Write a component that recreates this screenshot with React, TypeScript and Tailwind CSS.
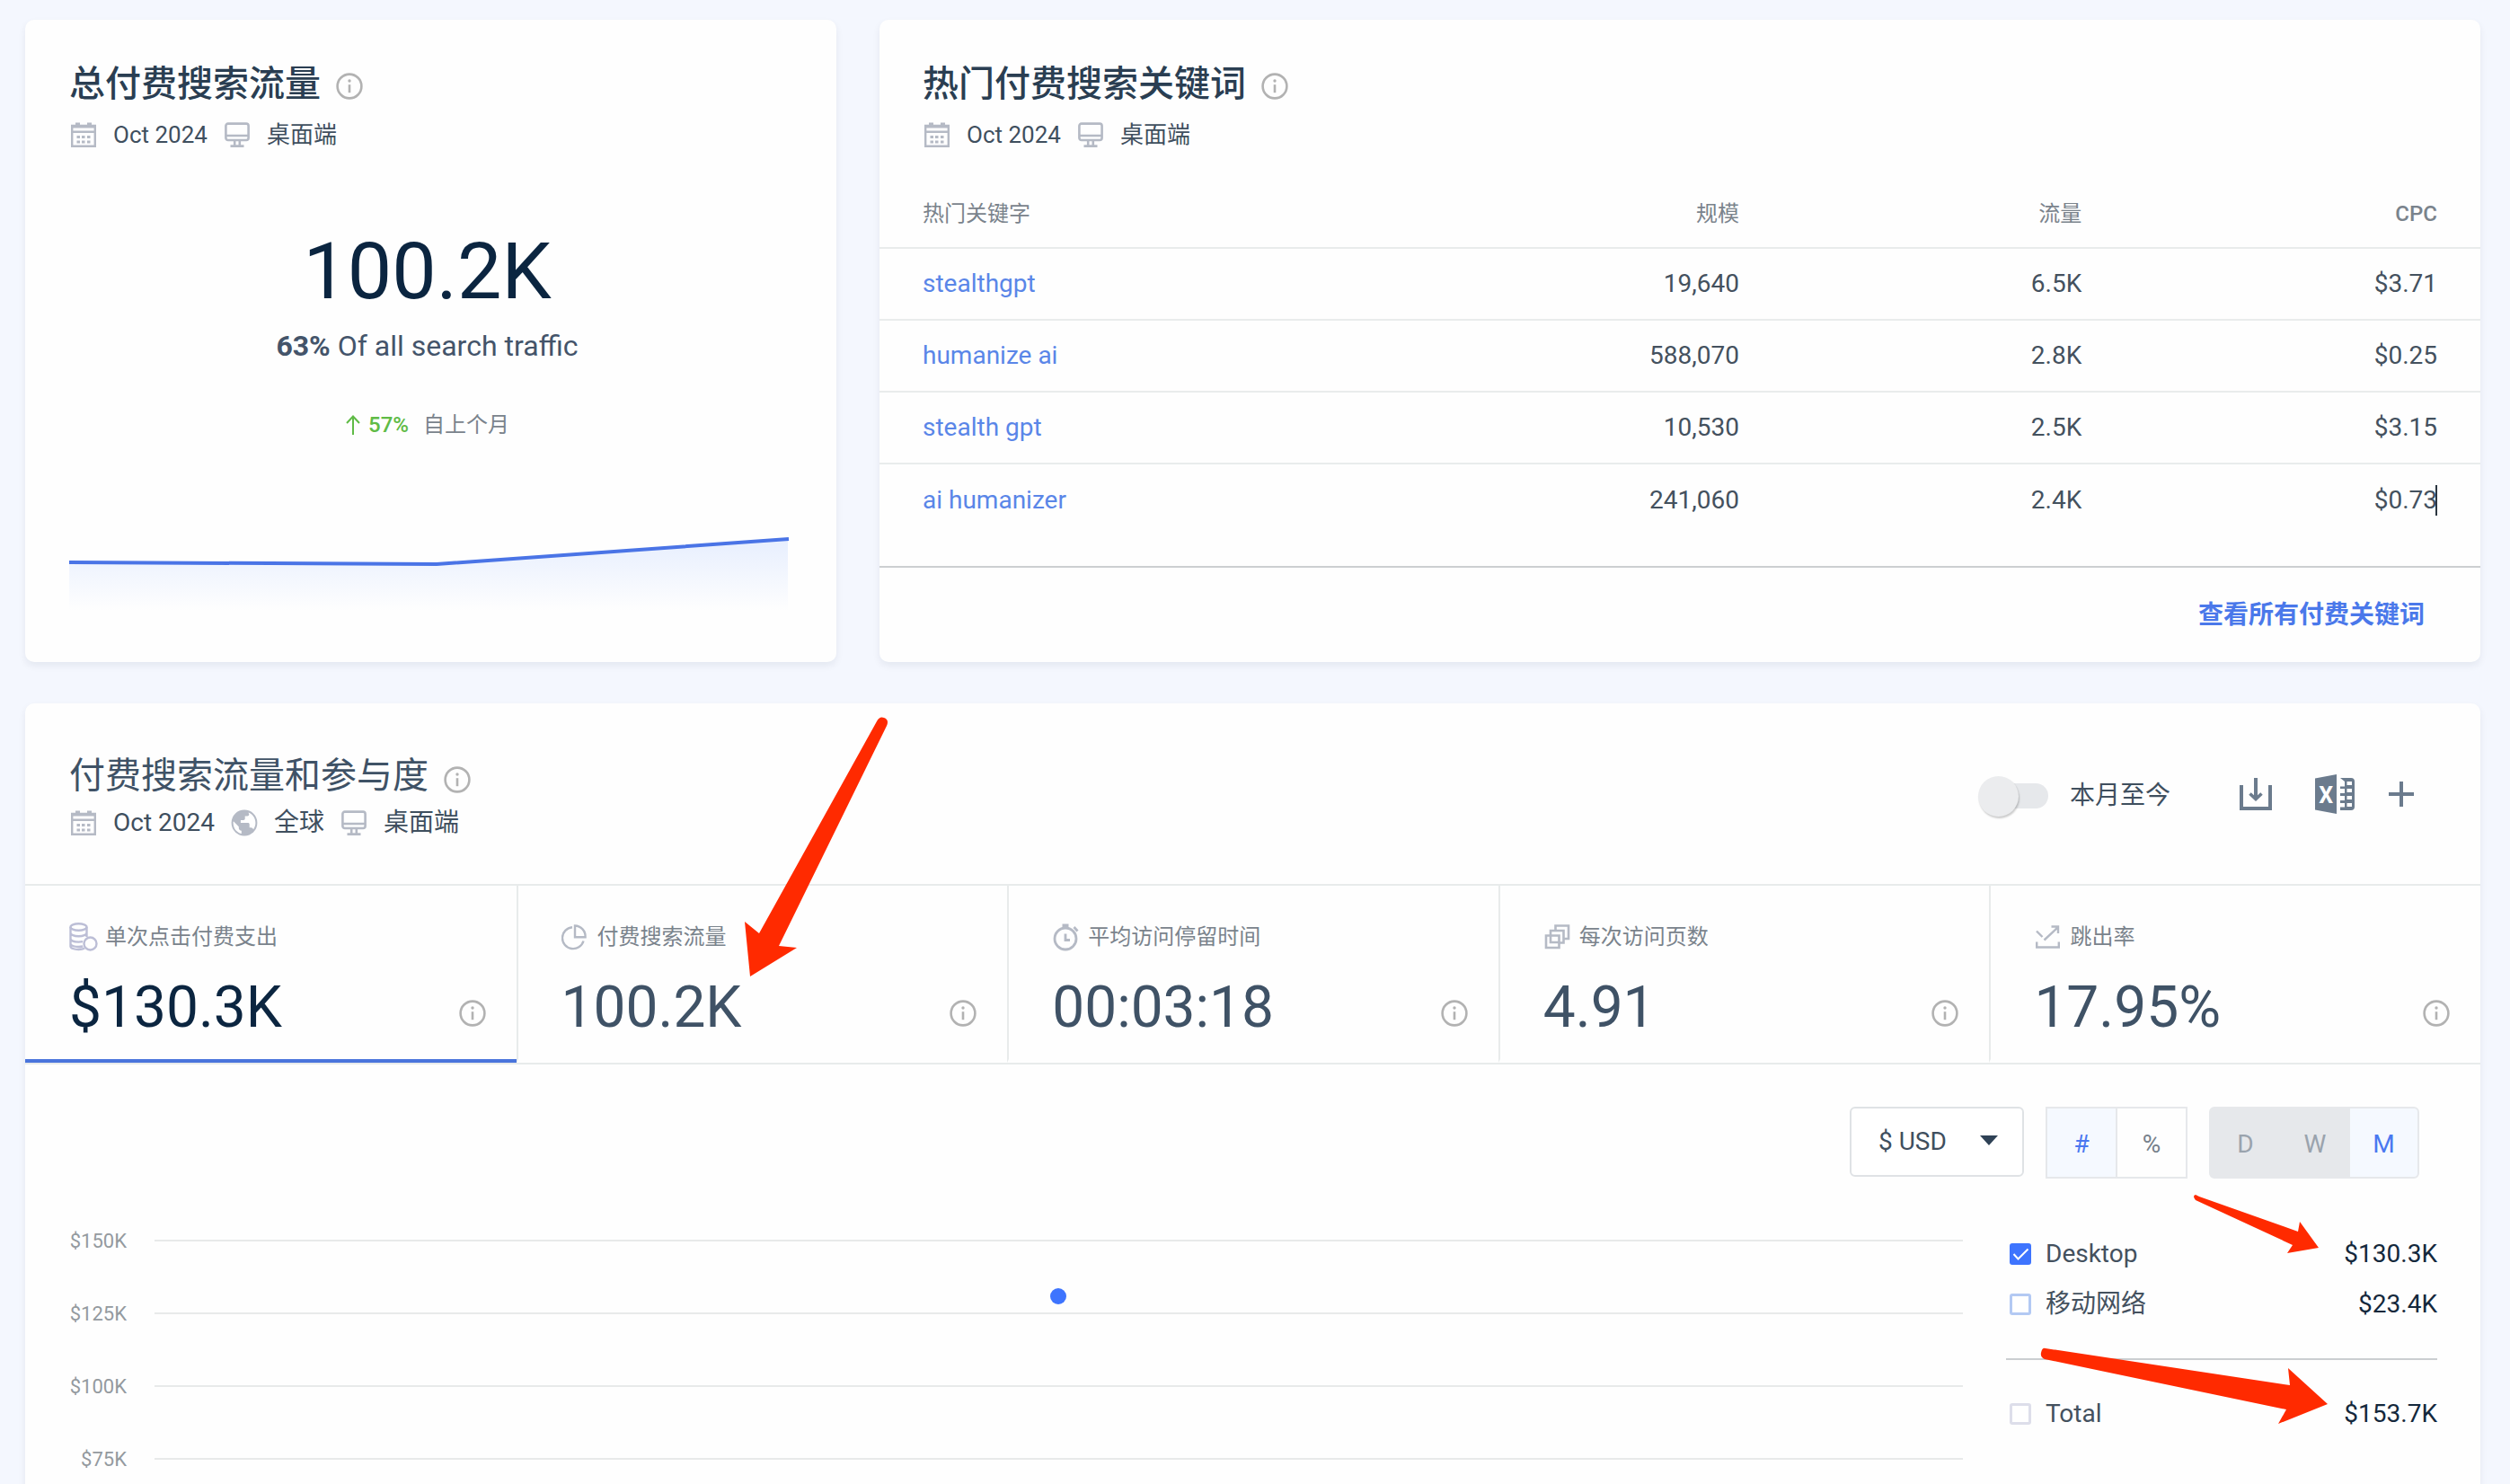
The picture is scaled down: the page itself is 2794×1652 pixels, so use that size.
import { useState } from "react";
import type { ReactNode } from "react";

const icon = "size-8 shrink-0 text-[#b5bac5]";

function InfoIcon() {
  return (
    <svg viewBox="0 0 30 30" className="size-[30px] shrink-0 text-[#b2b2b2]" fill="none" stroke="currentColor" strokeWidth="2.6" aria-hidden="true">
      <circle cx="15" cy="15" r="13.4" />
      <path d="M15 13.2v9" />
      <circle cx="15" cy="9" r="1.7" fill="currentColor" stroke="none" />
    </svg>
  );
}

function CalendarIcon() {
  return (
    <svg viewBox="0 0 32 32" className={icon} aria-hidden="true">
      <path fill="none" stroke="currentColor" strokeWidth="2.4" d="M3.200 6h25.600v22.800H3.200z" />
      <path fill="currentColor" d="M2 5h28v3.500H2zM2 11.500h28v2.500H2zM7 2.500h5V6H7zM20 2.500h5V6h-5zM8.500 17h3.500v3H8.500zM14 17h3.500v3H14zM20 17h3.500v3H20zM8.500 22.500h3.500v3H8.500zM14 22.500h3.500v3H14zM20 22.500h3.500v3H20z" />
    </svg>
  );
}

function MonitorIcon() {
  return (
    <svg viewBox="0 0 32 32" className={icon} fill="none" stroke="currentColor" strokeWidth="2.6" aria-hidden="true">
      <rect x="3.400" y="3.600" width="25.200" height="18.400" rx="2.500" />
      <path d="M3.400 17h25.200M13.200 22v6M18.800 22v6M8.500 28.600h15" />
    </svg>
  );
}

function GlobeIcon() {
  return (
    <svg viewBox="0 0 32 32" className={icon} aria-hidden="true">
      <circle cx="16" cy="16" r="14.4" fill="currentColor" />
      <path
        fill="#fff"
        d="M20.500 4.600c4.800 1.800 7.900 6.200 7.900 11.400 0 2.700-.8 5.200-2.300 7.200-.6-1.200-1.800-2-3.200-1.900h-1.200v-3.600c0-1-.7-1.600-1.600-1.600h-8.200v-3.200h3.200c.9 0 1.600-.7 1.600-1.600V8.400h2.600c1.100 0 2-.9 2-2zM3.900 14.300l5.900 6v1.500c0 1.600 1.300 3 3 3v3.300C7.600 27 3.600 22 3.600 16c0-.6.100-1.100.3-1.700z"
      />
    </svg>
  );
}

function CoinsIcon() {
  return (
    <svg viewBox="0 0 32 32" className="size-8 shrink-0 text-[#bcbed6]" fill="none" stroke="currentColor" strokeWidth="2.400" aria-hidden="true">
      <ellipse cx="10.500" cy="5" rx="9" ry="3.700" />
      <path d="M1.500 5v21.500c0 2 4 3.500 9 3.500 3 0 5-.5 6.500-1.300M19.500 5v11M1.500 11.500c0 2.200 4 3.800 9 3.800s9-1.600 9-3.800M1.500 18c0 2.200 4 3.600 9 3.600 1.700 0 3.300-.1 4.700-.4M1.500 24c1 1.700 4.500 3 9 3 1.700 0 3.300-.2 4.700-.5" />
      <circle cx="23.500" cy="23.500" r="7" />
    </svg>
  );
}

function PieIcon() {
  return (
    <svg viewBox="0 0 32 32" className={icon} fill="none" stroke="currentColor" strokeWidth="2.400" aria-hidden="true">
      <path d="M12 5.200A12 12 0 1 0 24.500 20.500" />
      <path d="M15 3.500v12.700h11.600A12 12 0 0 0 15 3.500z" />
    </svg>
  );
}

function StopwatchIcon() {
  return (
    <svg viewBox="0 0 32 32" className={icon} fill="none" stroke="currentColor" strokeWidth="2.800" aria-hidden="true">
      <circle cx="15" cy="18" r="12" />
      <path d="M15 12.500v7h5" />
      <path fill="currentColor" stroke="none" d="M11.500 1.500h7V6h-7zM23.500 6l2-2 4 4.500-2 2z" />
    </svg>
  );
}

function PagesIcon() {
  return (
    <svg viewBox="0 0 32 32" className={icon} fill="none" stroke="currentColor" strokeWidth="2.600" aria-hidden="true">
      <path d="M3 14.500h14.500v13.500H3z" />
      <path d="M8 14V9h14.500v13.500H18M8 14v8h9.500" />
      <path d="M13.500 9V3.500h14.500v14.500h-5.500" />
    </svg>
  );
}

function BounceIcon() {
  return (
    <svg viewBox="0 0 32 32" className={icon} fill="none" stroke="currentColor" strokeWidth="2.400" aria-hidden="true">
      <path d="M3 9.500l6.500 6.500M11.500 19.500L27 5M19.500 4.500h7.500v7.500" />
      <path d="M3.200 21.500v6h24.600v-6" />
    </svg>
  );
}

function DownloadIcon() {
  return (
    <svg viewBox="0 0 36 36" className="size-9" fill="none" stroke="currentColor" strokeWidth="4" aria-hidden="true">
      <path d="M2 8v26h32V8" />
      <path d="M18 0v23" />
      <path d="M11.500 17.500l6.500 6 6.500-6" strokeWidth="3.600" />
    </svg>
  );
}

function ExcelIcon() {
  return (
    <svg viewBox="0 0 44 44" className="size-11" aria-hidden="true">
      <path fill="currentColor" d="M0 4.500L24 0v44L0 39.500z" />
      <path fill="currentColor" d="M28 4h12a4 4 0 0 1 4 4v28a4 4 0 0 1-4 4H28v-3.500h5v-3.500h-5v-4h5v-4h-5v-4h5v-3.500h-5v-4h5v-4h-5V8h5z" />
      <path fill="#fff" d="M28 8h5v4h-5zM35.500 8H41v4h-5.500zM28 16h5v4h-5zM35.500 16H41v4h-5.500zM28 24h5v4h-5zM35.500 24H41v4h-5.500zM28 32h5v4h-5zM35.500 32H41v4h-5.500z" />
      <text x="12.300" y="31.500" textAnchor="middle" fill="#fff" fontFamily="Roboto, sans-serif" fontWeight="700" fontSize="25">X</text>
    </svg>
  );
}

function PlusIcon() {
  return (
    <svg viewBox="0 0 28 28" className="size-7" fill="none" stroke="currentColor" strokeWidth="4" aria-hidden="true">
      <path d="M14 0v28M0 14h28" />
    </svg>
  );
}

function Card({ className, children }: { className: string; children: ReactNode }) {
  return (
    <section className={`rounded-[10px] bg-[#fefefe] shadow-[0_4px_8px_rgba(14,30,62,0.07)] ${className}`}>
      {children}
    </section>
  );
}

function CardHeading({ title, className }: { title: string; className: string }) {
  return (
    <header className={`pt-11 pr-12 ${className}`}>
      <div className="flex items-center gap-[17px]">
        <h2 className="text-[40px] leading-14 font-medium text-[#2a3e52]">{title}</h2>
        <span className="pt-[3px]"><InfoIcon /></span>
      </div>
      <div className="mt-[10px] flex items-center gap-[17px] text-[26px] leading-9 text-[#3f4f5e]">
        <CalendarIcon />
        <span>Oct 2024</span>
        <MonitorIcon />
        <span>桌面端</span>
      </div>
    </header>
  );
}

const keywords = [
  ["stealthgpt", "19,640", "6.5K", "$3.71"],
  ["humanize ai", "588,070", "2.8K", "$0.25"],
  ["stealth gpt", "10,530", "2.5K", "$3.15"],
  ["ai humanizer", "241,060", "2.4K", "$0.73"],
];

const metrics = [
  { label: "单次点击付费支出", value: "$130.3K", Icon: CoinsIcon },
  { label: "付费搜索流量", value: "100.2K", Icon: PieIcon },
  { label: "平均访问停留时间", value: "00:03:18", Icon: StopwatchIcon },
  { label: "每次访问页数", value: "4.91", Icon: PagesIcon },
  { label: "跳出率", value: "17.95%", Icon: BounceIcon },
];

function TrafficCard() {
  return (
    <Card className="flex flex-col">
      <CardHeading title="总付费搜索流量" className="pl-[49px]" />
      <div className="flex flex-col items-center pt-[84px] pr-2">
        <p className="text-[88px] leading-[100px] text-[#0b2540]">100.2K</p>
        <p className="mt-[13px] text-[32px] leading-10 text-[#44546a]">
          <b className="font-bold">63%</b> Of all search traffic
        </p>
        <p className="mt-[52px] flex items-center text-2xl leading-8 text-[#7a838c]">
          <svg viewBox="0 0 18 22" className="mr-2 h-[22px] w-[18px] text-[#5fbb46]" fill="none" stroke="currentColor" strokeWidth="2" aria-hidden="true">
            <path d="M9 22V2M2 9l7-7.500L16 9" />
          </svg>
          <span className="mr-4 font-medium text-[#5fbb46]">57%</span>
          自上个月
        </p>
      </div>
      <svg viewBox="0 0 807 90" preserveAspectRatio="none" className="mx-12 mt-auto mb-[52px] h-[90px]" aria-hidden="true">
        <defs>
          <linearGradient id="trend" x1="0" y1="0" x2="0" y2="1">
            <stop offset="0" stopColor="#3e7cff" stopOpacity="0.12" />
            <stop offset="1" stopColor="#3e7cff" stopOpacity="0" />
          </linearGradient>
        </defs>
        <path d="M1 31L410 33L801 5V85H1z" fill="url(#trend)" />
        <path d="M1 31L410 33L802 5" fill="none" stroke="#4a74e6" strokeWidth="4" />
      </svg>
    </Card>
  );
}

function KeywordsCard() {
  return (
    <Card className="flex flex-col">
      <CardHeading title="热门付费搜索关键词" className="pl-12" />
      <table className="mt-8 w-full table-fixed text-right text-[28px] text-[#44515e]">
        <colgroup>
          <col className="w-[32%]" />
          <col className="w-[21.7%]" />
          <col className="w-[21.4%]" />
          <col />
        </colgroup>
        <thead>
          <tr className="h-[76px] text-2xl text-[#7a838c]">
            <th className="pl-12 text-left font-normal">热门关键字</th>
            <th className="font-normal">规模</th>
            <th className="font-normal">流量</th>
            <th className="pr-12 font-medium">CPC</th>
          </tr>
        </thead>
        <tbody>
          {keywords.map(([word, size, traffic, cpc], i) => (
            <tr key={word} className="h-20 border-t-2 border-[#e9ecec]">
              <td className="pl-12 text-left">
                <a href="#" className="text-[#5a86e8]">{word}</a>
              </td>
              <td>{size}</td>
              <td>{traffic}</td>
              <td className="pr-12">
                <span className="relative inline-block">
                  {cpc}
                  {i === 3 && <span className="absolute inset-y-1 right-0 w-[2px] bg-[#2b3640]" />}
                </span>
              </td>
            </tr>
          ))}
        </tbody>
      </table>
      <footer className="mt-auto flex h-[107px] items-center justify-end border-t-2 border-[#cccfd1] px-[62px]">
        <a href="#" className="text-[28px] leading-9 font-bold text-[#4a78ea]">查看所有付费关键词</a>
      </footer>
    </Card>
  );
}

function LegendRow({ label, value, tone, defaultChecked = false }: { label: string; value: string; tone: string; defaultChecked?: boolean }) {
  return (
    <label className="flex h-14 items-center pl-1 text-[28px] text-[#44515e]">
      <span className="relative mr-4 flex size-6">
        <input type="checkbox" defaultChecked={defaultChecked} className={`peer size-6 appearance-none rounded-[3px] border-[3px] bg-white checked:border-[#3e74fe] checked:bg-[#3e74fe] ${tone}`} />
        <svg viewBox="0 0 24 24" className="pointer-events-none absolute inset-0 hidden size-6 peer-checked:block" fill="none" stroke="#fff" strokeWidth="2" aria-hidden="true">
          <path d="M4.500 12l5 5.500L20.500 6.500" />
        </svg>
      </span>
      <span className="grow">{label}</span>
      <span className="text-[#14283c]">{value}</span>
    </label>
  );
}

function EngagementCard() {
  const [active, setActive] = useState(0);
  return (
    <Card className="relative col-span-2 h-[1000px]">
      <header className="flex items-start justify-between border-b-2 border-[#e8ebeb] pt-[53px] pr-[74px] pb-[50px] pl-[49px]">
        <div>
          <div className="flex items-center gap-[17px]">
            <h2 className="text-[40px] leading-14 text-[#3f5266]">付费搜索流量和参与度</h2>
            <span className="pt-2"><InfoIcon /></span>
          </div>
          <div className="mt-[6px] flex items-center gap-[17px] text-[28px] leading-9 text-[#3f4f5e]">
            <CalendarIcon />
            <span>Oct 2024</span>
            <GlobeIcon />
            <span>全球</span>
            <MonitorIcon />
            <span>桌面端</span>
          </div>
        </div>
        <div className="flex items-center pt-[26px] text-[#6b7b8d]">
          <label className="flex items-center gap-6 text-[28px] leading-[46px] text-[#3f4f5e]">
            <input
              type="checkbox"
              role="switch"
              className="relative h-7 w-[78px] appearance-none before:absolute before:inset-y-0 before:right-0 before:left-3 before:rounded-full before:bg-[#e6e8eb] after:absolute after:-top-2 after:left-0 after:size-[45px] after:rounded-full after:bg-[#ebecee] after:shadow-[1px_2px_2px_rgba(0,0,0,0.2)] checked:after:left-[33px]"
            />
            本月至今
          </label>
          <div className="flex items-center pb-1">
            <button type="button" aria-label="Download" className="ml-[77px]"><DownloadIcon /></button>
            <button type="button" aria-label="Excel" className="ml-12"><ExcelIcon /></button>
            <button type="button" aria-label="Add" className="ml-[38px]"><PlusIcon /></button>
          </div>
        </div>
      </header>

      <div role="tablist" className="grid grid-cols-5 border-b-2 border-[#e8ebeb]">
        {metrics.map(({ label, value, Icon }, i) => (
          <button
            key={label}
            type="button"
            role="tab"
            aria-selected={active === i}
            onClick={() => setActive(i)}
            className={`border-b-4 pt-[41px] pr-[34px] pb-[21px] text-left ${i > 0 ? "border-l-2 border-l-[#e8ebeb] pl-12" : "pl-[49px]"} ${active === i ? "border-b-[#4a74dc]" : "border-b-transparent"}`}
          >
            <span className="flex items-center gap-2 text-2xl leading-8 text-[#7a838c]">
              <Icon />
              {label}
            </span>
            <span className="mt-[27px] flex items-center justify-between">
              <span className={`text-[64px] leading-[72px] ${active === i ? "text-[#0b2540]" : "text-[#3f5266]"}`}>{value}</span>
              <span className="pt-3"><InfoIcon /></span>
            </span>
          </button>
        ))}
      </div>

      <div className="flex items-start justify-end gap-6 pt-[47px] pr-[68px] text-[28px]">
        <div className="relative">
          <select aria-label="Currency" className="h-[78px] w-[194px] appearance-none rounded-md border-2 border-[#dfe2e5] bg-white pl-[30px] text-[#3f4f5e]">
            <option>$ USD</option>
          </select>
          <svg viewBox="0 0 20 11" className="pointer-events-none absolute top-8 right-[29px] h-[11px] w-5 text-[#2f4256]" aria-hidden="true">
            <path fill="currentColor" d="M0 0h20L10 11z" />
          </svg>
        </div>
        <div className="flex h-20 border-2 border-[#e6e8eb]">
          <button type="button" className="w-[78px] border-r-2 border-[#e6e8eb] bg-[#f5f9ff] pt-1 text-[#4a78f0]">#</button>
          <button type="button" className="w-[76px] pt-1 text-[#76808b]">%</button>
        </div>
        <div className="flex h-20 overflow-hidden rounded-md border-2 border-[#e6e8eb] bg-[#e6e8eb] text-[#9aa3ad]">
          <button type="button" className="w-[77px] pt-1">D</button>
          <button type="button" className="w-[78px] pt-1">W</button>
          <button type="button" className="w-[75px] bg-[#f5f9ff] pt-1 text-[#4a78f0]">M</button>
        </div>
      </div>

      <div className="flex gap-12 px-12 pt-7">
        <div className="relative grow">
          {["$150K", "$125K", "$100K", "$75K"].map((tick) => (
            <div key={tick} className="flex h-[81px] items-center gap-[31px]">
              <span className="w-[65px] pt-[3px] text-right text-[22px] leading-7 text-[#949a9f]">{tick}</span>
              <span className="h-[2px] grow bg-[#e8eaea]" />
            </div>
          ))}
          <div className="absolute inset-y-0 right-0 left-24">
            <span className="absolute top-[94px] left-1/2 -ml-[10px] size-[18px] rounded-full bg-[#3e74fe]" />
          </div>
        </div>
        <div className="w-[480px] pt-7">
          <LegendRow label="Desktop" value="$130.3K" tone="border-[#3e74fe]" defaultChecked />
          <LegendRow label="移动网络" value="$23.4K" tone="border-[#b3c9f3]" />
          <hr className="my-8 border-t-2 border-[#cbced1]" />
          <LegendRow label="Total" value="$153.7K" tone="border-[#dddeea]" />
        </div>
      </div>

      <svg viewBox="0 0 162 292" className="pointer-events-none absolute top-[14px] left-[799px] h-[292px] w-[162px]" fill="#ff2a00" aria-hidden="true">
        <path d="M149 6Q152 0 157 2Q163 4 160 11L40 256L60 258L8 290L2 229L18 242z" />
      </svg>
      <svg viewBox="0 0 142 68" className="pointer-events-none absolute top-[547px] right-[179px] h-[68px] w-[142px]" fill="#ff2a00" aria-hidden="true">
        <path d="M8 2L118 41L120 30L141 59L106 65L112 56L4 6Q0 1 4 0z" />
      </svg>
      <svg viewBox="0 0 320 86" className="pointer-events-none absolute top-[717px] right-[170px] h-[86px] w-[320px]" fill="#ff2a00" aria-hidden="true">
        <path d="M6 1L278 42L276 23L320 63L265 85L274 69L5 13Q0 11 1 6Q2 0 6 1z" />
      </svg>
    </Card>
  );
}

export default function App() {
  return (
    <main className="h-screen overflow-hidden bg-[#f4f7fe] pt-[22px] pr-[33px] pl-7 font-[Roboto,'Noto_Sans_CJK_SC',sans-serif]">
      <div className="grid grid-cols-[903fr_1782fr] grid-rows-[715px_auto] gap-x-12 gap-y-[46px]">
        <TrafficCard />
        <KeywordsCard />
        <EngagementCard />
      </div>
    </main>
  );
}
